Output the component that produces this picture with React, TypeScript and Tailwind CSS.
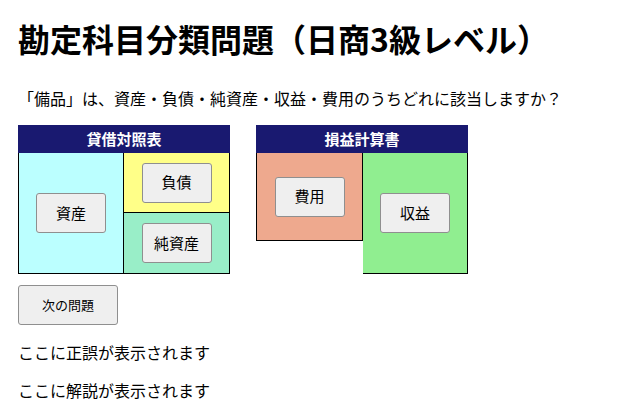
import React from 'react';

const btn =
    "w-[70px] h-[40px] bg-[#efefef] border border-[#8f8f8f] rounded-[3px] text-[15px] text-black flex items-center justify-center";

function Header({ title }: { title: string }) {
    return (
        <div className="h-[28px] bg-[#191970] text-white font-bold text-[15px] flex items-center justify-center">
            {title}
        </div>
    );
}

export default function App() {
    return (
        <div className="px-[18px] pt-[18px] text-black font-['Noto_Sans_CJK_JP',sans-serif]">
            <h1 className="text-[32px] font-bold leading-[40px]">勘定科目分類問題（日商3級レベル）</h1>
            <p className="mt-[28px] text-[16px] leading-[24px]">
                「備品」は、資産・負債・純資産・収益・費用のうちどれに該当しますか？
            </p>

            <div className="mt-[15px] flex gap-[26px]">
                {/* 貸借対照表 */}
                <div className="w-[212px]">
                    <Header title="貸借対照表" />
                    <div className="flex h-[121px] border border-black border-t-0">
                        <div className="w-[105px] bg-[#bbffff] border-r border-black flex items-center justify-center">
                            <button className={btn}>資産</button>
                        </div>
                        <div className="flex-1 flex flex-col">
                            <div className="h-[60px] bg-[#ffff88] border-b border-black flex items-center justify-center">
                                <button className={btn}>負債</button>
                            </div>
                            <div className="flex-1 bg-[#99eec8] flex items-center justify-center">
                                <button className={btn}>純資産</button>
                            </div>
                        </div>
                    </div>
                </div>

                {/* 損益計算書 */}
                <div className="w-[212px]">
                    <Header title="損益計算書" />
                    <div className="flex items-start">
                        <div className="w-[107px] h-[88px] bg-[#eea98e] border border-black border-t-0 flex items-center justify-center">
                            <button className={btn}>費用</button>
                        </div>
                        <div className="w-[105px] h-[121px] bg-[#90ee90] border border-black border-t-0 border-l-0 flex items-center justify-center">
                            <button className={btn}>収益</button>
                        </div>
                    </div>
                </div>
            </div>

            <button className="mt-[11px] w-[100px] h-[40px] bg-[#efefef] border border-[#8f8f8f] rounded-[3px] text-[13px] flex items-center justify-center">
                次の問題
            </button>
            <p className="mt-[15px] text-[16px] leading-[24px]">ここに正誤が表示されます</p>
            <p className="mt-[14px] text-[16px] leading-[24px]">ここに解説が表示されます</p>
        </div>
    );
}
